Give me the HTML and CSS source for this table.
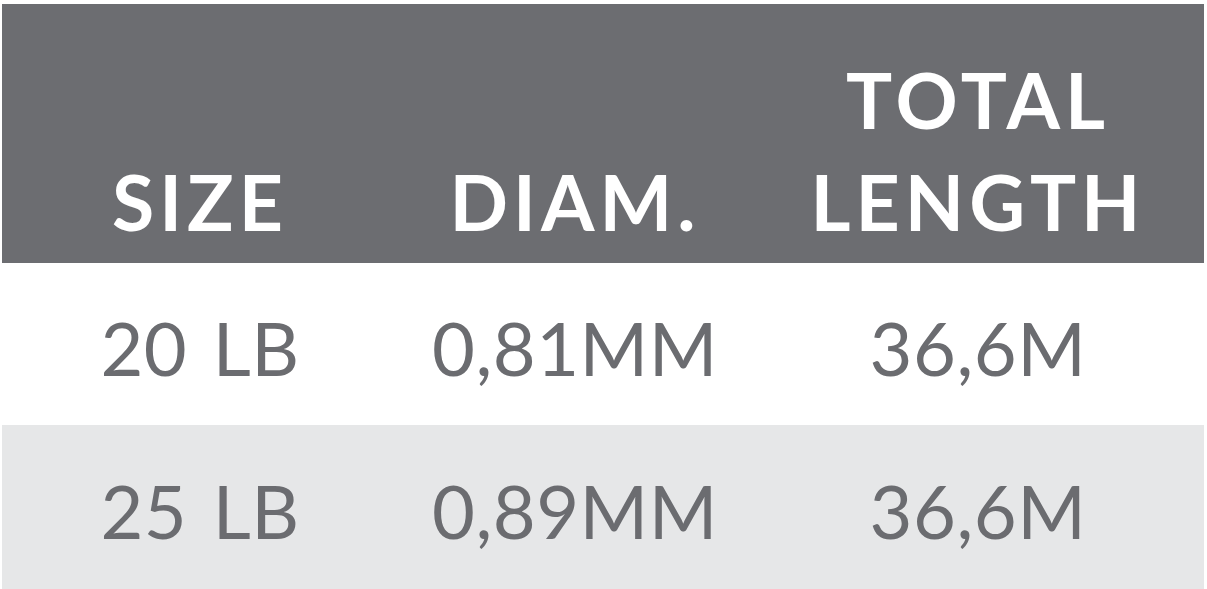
FILE: index.html
```html
<!DOCTYPE html>
<html>
<head>
<meta charset="utf-8">
<link rel="stylesheet" href="styles.css">
</head>
<body>
<div class="wrap">
  <table class="spec">
    <thead>
      <tr class="head">
        <th class="c1">SIZE</th>
        <th class="c2">DIAM.</th>
        <th class="c3">TOTAL<br>LENGTH</th>
      </tr>
    </thead>
    <tbody>
      <tr class="row odd">
        <td>20 LB</td>
        <td>0,81MM</td>
        <td>36,6M</td>
      </tr>
      <tr class="row even">
        <td>25 LB</td>
        <td>0,89MM</td>
        <td>36,6M</td>
      </tr>
    </tbody>
  </table>
</div>
</body>
</html>
```
FILE: styles.css
```css
html, body {
  margin: 0;
  padding: 0;
  background: #ffffff;
}
.wrap {
  padding: 4px 3px 0 2px;
}
.spec {
  width: 1202px;
  border-collapse: collapse;
  table-layout: fixed;
  font-family: Lato, "Open Sans", sans-serif;
}
.c1 { width: 396px; }
.c2 { width: 354px; }
.c3 { width: 452px; }
.head {
  background: #6c6d71;
  height: 259px;
}
.head th {
  color: #ffffff;
  font-weight: 700;
  font-size: 77px;
  line-height: 102px;
  letter-spacing: 5px;
  text-align: center;
  vertical-align: bottom;
  padding: 0 0 11px 0;
}
.row td {
  color: #6b6c70;
  font-weight: 400;
  font-size: 74px;
  letter-spacing: 0.5px;
  word-spacing: 6px;
  text-align: center;
  vertical-align: middle;
  padding: 6px 0 0 0;
}
.odd { height: 162px; background: #ffffff; }
.even { height: 164px; background: #e6e7e8; }
```
